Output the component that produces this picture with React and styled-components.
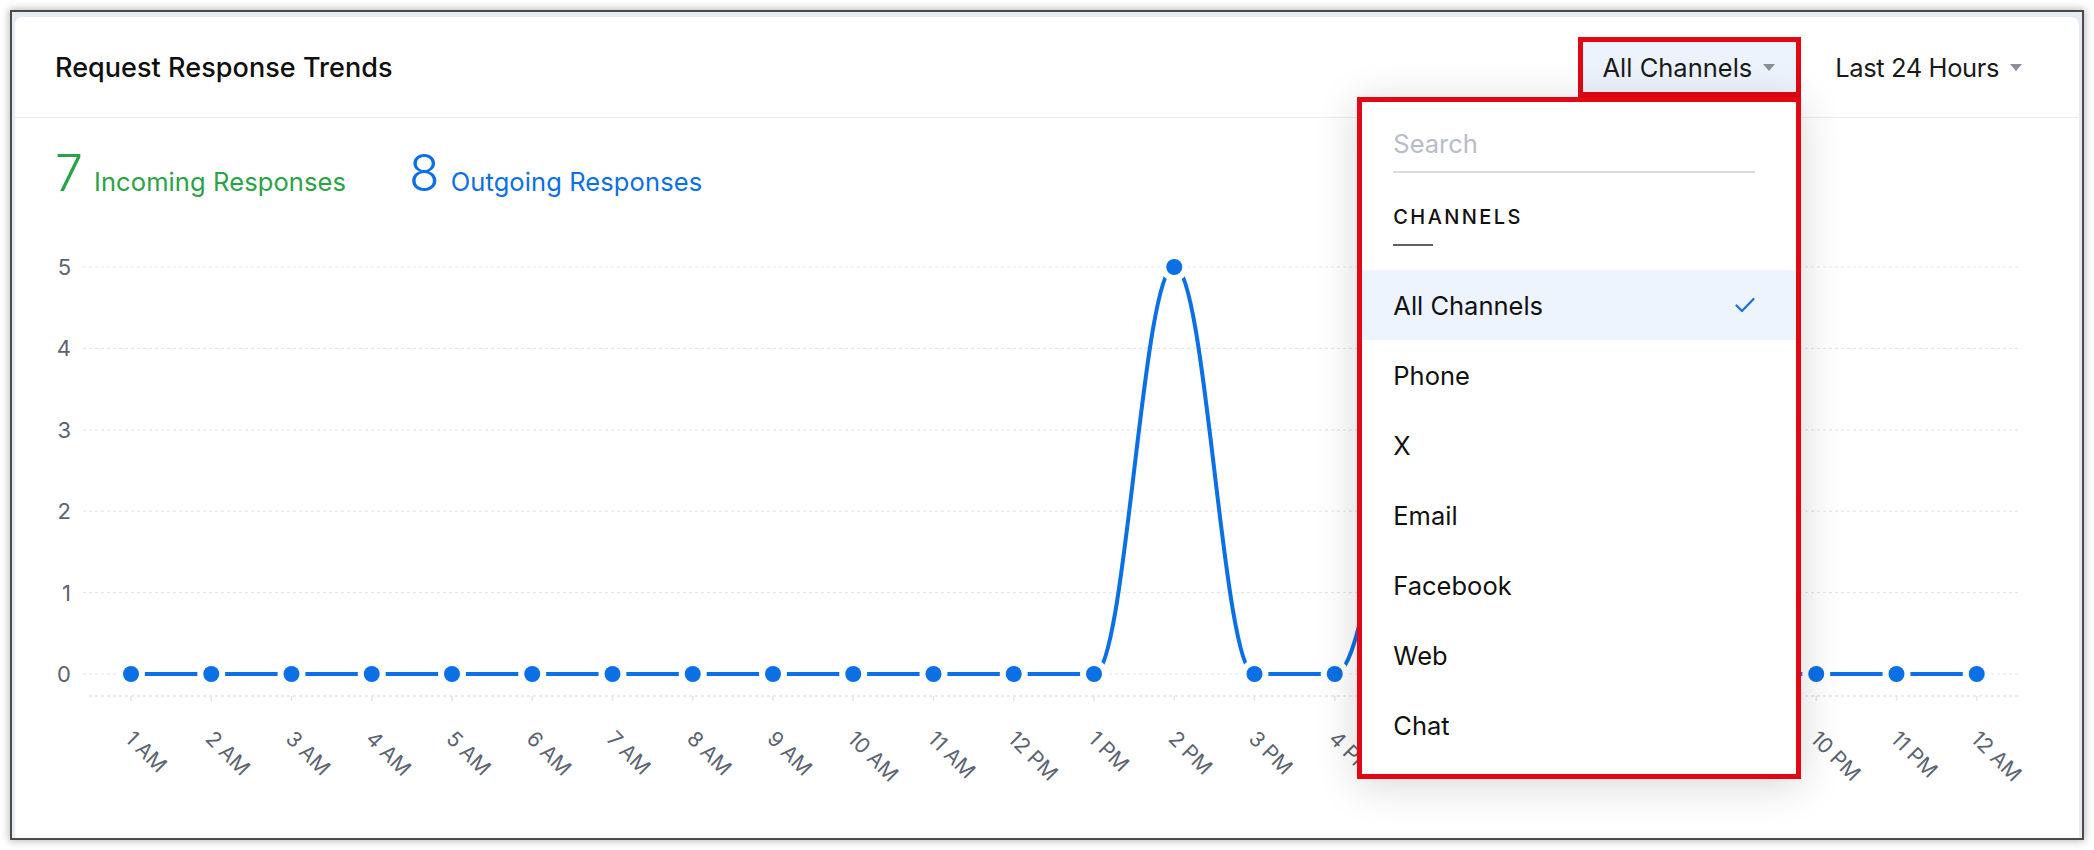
import React from 'react';
import styled, { createGlobalStyle } from 'styled-components';

const GlobalStyle = createGlobalStyle`
  html, body { margin: 0; padding: 0; background: #ffffff; overflow: hidden; }
  body { font-family: Inter, "Noto Sans", Arial, sans-serif; color: #141414; }
  * { box-sizing: border-box; }
`;

const Frame = styled.div`
  margin: 10px;
  width: 2074px;
  height: 830px;
  border: 2px solid #4b4b4b;
  background: #e7ebf3;
  padding: 5px 3px 0 3px;
  display: flex;
  box-shadow: 0 0 8px 1px rgba(0, 0, 0, 0.28);
`;

const Card = styled.div`
  flex: 1;
  background: #ffffff;
  border-radius: 8px 8px 0 0;
  display: flex;
  flex-direction: column;
  min-width: 0;
`;

const Header = styled.div`
  height: 101px;
  border-bottom: 1px solid #e7eaf0;
  display: flex;
  align-items: center;
  justify-content: space-between;
  padding: 0 36px 0 40px;
  position: relative;
  z-index: 2;
`;

const Title = styled.h1`
  margin: 0;
  font-size: 27px;
  font-weight: 500;
  color: #0f0f0f;
  letter-spacing: 0.05px;
`;

const Controls = styled.div`
  display: flex;
  align-items: center;
  gap: 19px;
`;

const FilterWrap = styled.div`
  position: relative;
`;

const FilterButton = styled.button`
  height: 50px;
  padding: 0 21px 0 20px;
  display: flex;
  align-items: center;
  gap: 11px;
  border: none;
  font-family: inherit;
  font-size: 25.5px;
  letter-spacing: ${(p) => (p.$tight ? '-0.4px' : '0')};
  color: #1a1a1a;
  background: ${(p) => (p.$active ? '#edf3fc' : 'transparent')};
  outline: ${(p) => (p.$marked ? '5px solid #e30613' : 'none')};
  cursor: pointer;
`;

const Caret = () => (
  <svg width="12" height="7" viewBox="0 0 12 7">
    <path d="M0 0 L12 0 L6 7 Z" fill="#8a8f99" />
  </svg>
);

const Panel = styled.div`
  position: absolute;
  top: calc(100% + 5px);
  right: -5px;
  width: 444px;
  background: #ffffff;
  border: 5px solid #e30613;
  padding-bottom: 14px;
  box-shadow: 0 6px 40px rgba(0, 0, 0, 0.16);
  z-index: 5;
`;

const SearchInput = styled.input`
  display: block;
  width: 362px;
  margin: 0 0 0 31px;
  padding: 26px 0 11px;
  border: none;
  border-bottom: 2px solid #d7dbe2;
  font-family: inherit;
  font-size: 25.5px;
  line-height: 32px;
  color: #222;
  outline: none;
  background: transparent;
  &::placeholder { color: #b8bcc7; }
`;

const SectionLabel = styled.div`
  margin: 32px 0 0 31px;
  font-size: 20px;
  line-height: 24px;
  font-weight: 500;
  letter-spacing: 2.4px;
  color: #111;
`;

const SectionRule = styled.div`
  width: 40px;
  height: 2px;
  background: #5b606d;
  margin: 15px 0 24px 31px;
`;

const OptionRow = styled.div`
  height: 70px;
  padding: 0 41px 0 31px;
  display: flex;
  align-items: center;
  justify-content: space-between;
  font-size: 25.5px;
  color: #111;
  background: ${(p) => (p.$selected ? '#edf4fe' : '#ffffff')};
`;

const Check = () => (
  <svg width="20" height="16" viewBox="0 0 20 16">
    <path d="M1.5 8.5 L7 14 L18.5 2" fill="none" stroke="#1a6fe0" strokeWidth="2.2" strokeLinecap="round" strokeLinejoin="round" />
  </svg>
);

const Stats = styled.div`
  height: 102px;
  padding: 30px 40px 0;
  display: flex;
  align-items: baseline;
  gap: 63px;
`;

const Stat = styled.div`
  display: flex;
  align-items: baseline;
  gap: 11px;
  color: ${(p) => p.$color};
`;

const StatValue = styled.span`
  font-size: 50px;
  line-height: 50px;
  font-weight: 300;
`;

const StatLabel = styled.span`
  font-size: 25.5px;
  letter-spacing: 0.1px;
`;

const ChartSvg = styled.svg`
  display: block;
  flex: 0 0 auto;
`;

const HOURS = [
  '1 AM','2 AM','3 AM','4 AM','5 AM','6 AM','7 AM','8 AM','9 AM','10 AM','11 AM','12 PM',
  '1 PM','2 PM','3 PM','4 PM','5 PM','6 PM','7 PM','8 PM','9 PM','10 PM','11 PM','12 AM',
];
const VALUES = [0,0,0,0,0,0,0,0,0,0,0,0,0,5,0,0,3,0,0,0,0,0,0,0];

const X0 = 116;
const DX = 80.25;
const Y0 = 454;
const DY = 81.4;
const BLUE = '#0b6fe6';

function controls(pts, i) {
  const p = pts[i];
  const last = pts[i - 1];
  const next = pts[i + 1];
  if (!last || !next) return null;
  const s = 1.5;
  const d = 2.5;
  const lx = (s * p.x + last.x) / d;
  let ly = (s * p.y + last.y) / d;
  const rx = (s * p.x + next.x) / d;
  let ry = (s * p.y + next.y) / d;
  let corr = 0;
  if (rx !== lx) corr = ((ry - ly) * (rx - p.x)) / (rx - lx) + p.y - ry;
  ly += corr;
  ry += corr;
  if (ly > last.y && ly > p.y) { ly = Math.max(last.y, p.y); ry = 2 * p.y - ly; }
  else if (ly < last.y && ly < p.y) { ly = Math.min(last.y, p.y); ry = 2 * p.y - ly; }
  if (ry > next.y && ry > p.y) { ry = Math.max(next.y, p.y); ly = 2 * p.y - ry; }
  else if (ry < next.y && ry < p.y) { ry = Math.min(next.y, p.y); ly = 2 * p.y - ry; }
  return { lx, ly, rx, ry };
}

function splinePath(pts) {
  const c = pts.map((_, i) => controls(pts, i));
  let d = `M ${pts[0].x} ${pts[0].y}`;
  for (let i = 1; i < pts.length; i++) {
    const a = c[i - 1] ? [c[i - 1].rx, c[i - 1].ry] : [pts[i - 1].x, pts[i - 1].y];
    const b = c[i] ? [c[i].lx, c[i].ly] : [pts[i].x, pts[i].y];
    d += ` C ${a[0]} ${a[1]} ${b[0]} ${b[1]} ${pts[i].x} ${pts[i].y}`;
  }
  return d;
}

function TrendChart() {
  const pts = VALUES.map((v, i) => ({ x: X0 + DX * i, y: Y0 - DY * v }));
  return (
    <ChartSvg width="2064" height="618" viewBox="0 0 2064 618">
      {[0, 1, 2, 3, 4, 5].map((v) => (
        <g key={v}>
          <line x1="68" x2="2003" y1={Y0 - DY * v} y2={Y0 - DY * v} stroke="#e2e5eb" strokeWidth="1.2" strokeDasharray="3 3" />
          <text x="56" y={Y0 - DY * v} textAnchor="end" dominantBaseline="central" fontFamily="Inter, sans-serif" fontSize="22" fill="#5c6371">{v}</text>
        </g>
      ))}
      <line x1="74" x2="2003" y1="476" y2="476" stroke="#e2e5eb" strokeWidth="1.5" strokeDasharray="3 3" />
      {pts.map((p, i) => (
        <line key={`t${i}`} x1={p.x} x2={p.x} y1="476" y2="481" stroke="#e2e5eb" strokeWidth="1.5" />
      ))}
      <path d={splinePath(pts)} fill="none" stroke={BLUE} strokeWidth="4" />
      {pts.map((p, i) => (
        <g key={`m${i}`}>
          <circle cx={p.x} cy={p.y} r="14" fill="#ffffff" />
          <circle cx={p.x} cy={p.y} r="8" fill={BLUE} />
        </g>
      ))}
      {HOURS.map((h, i) => {
        const x = X0 + DX * i - 7;
        const y = 520;
        return (
          <text key={h} x={x} y={y} transform={`rotate(45 ${x} ${y})`} fontFamily="Inter, sans-serif" fontSize="21" fill="#5c6371">{h}</text>
        );
      })}
    </ChartSvg>
  );
}

const CHANNELS = ['All Channels', 'Phone', 'X', 'Email', 'Facebook', 'Web', 'Chat'];

export default function App() {
  return (
    <>
      <GlobalStyle />
      <Frame>
        <Card>
          <Header>
            <Title>Request Response Trends</Title>
            <Controls>
              <FilterWrap>
                <FilterButton $active $marked>
                  All Channels <Caret />
                </FilterButton>
                <Panel>
                  <SearchInput placeholder="Search" />
                  <SectionLabel>CHANNELS</SectionLabel>
                  <SectionRule />
                  {CHANNELS.map((c, i) => (
                    <OptionRow key={c} $selected={i === 0}>
                      <span>{c}</span>
                      {i === 0 && <Check />}
                    </OptionRow>
                  ))}
                </Panel>
              </FilterWrap>
              <FilterButton $tight>
                Last 24 Hours <Caret />
              </FilterButton>
            </Controls>
          </Header>
          <Stats>
            <Stat $color="#29a346">
              <StatValue>7</StatValue>
              <StatLabel>Incoming Responses</StatLabel>
            </Stat>
            <Stat $color="#0b6fe6">
              <StatValue>8</StatValue>
              <StatLabel>Outgoing Responses</StatLabel>
            </Stat>
          </Stats>
          <TrendChart />
        </Card>
      </Frame>
    </>
  );
}
